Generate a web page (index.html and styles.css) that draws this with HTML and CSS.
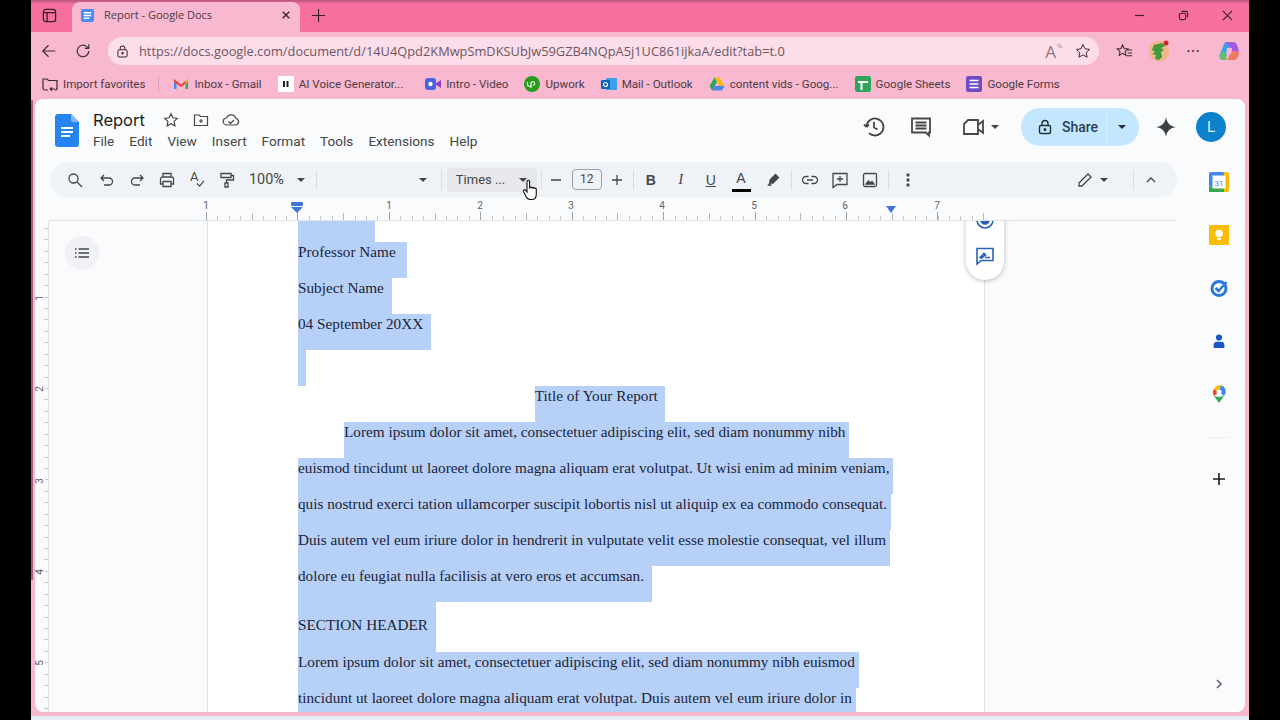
FILE: index.html
```html
<!DOCTYPE html>
<html lang="en">
<head>
    <meta charset="UTF-8">
    <title>Report - Google Docs</title>
    <link rel="stylesheet" href="styles.css">
</head>
<body>
<div class="browser">
    <!-- tab strip -->
    <div class="titlebar">
        <svg class="win-tabs" viewBox="0 0 16 16"><rect x="1.5" y="1.5" width="13" height="13" rx="2.5"/><path d="M2 5h12M5.5 5v9"/></svg>
        <div class="tab">
            <svg class="tab-icon" viewBox="0 0 16 16"><rect x="1" y="1" width="14" height="14" rx="2.5" fill="#4a8df0"/><path d="M4 5h8M4 8h8M4 11h6" stroke="#fff" stroke-width="1.5"/></svg>
            <span class="tab-title">Report - Google Docs</span>
            <svg class="tab-close" viewBox="0 0 12 12"><path d="M2 2l8 8M10 2l-8 8"/></svg>
        </div>
        <svg class="new-tab" viewBox="0 0 16 16"><path d="M8 1v14M1 8h14"/></svg>
        <div class="win-controls">
            <svg viewBox="0 0 12 12"><path d="M1 6h10"/></svg>
            <svg viewBox="0 0 12 12"><rect x="1.5" y="3.5" width="7" height="7" rx="2"/><path d="M4 1.5h4.5a2 2 0 0 1 2 2V8"/></svg>
            <svg viewBox="0 0 12 12"><path d="M1 1l10 10M11 1L1 11"/></svg>
        </div>
    </div>

    <!-- address bar -->
    <div class="navbar">
        <svg class="nav-btn" viewBox="0 0 18 18"><path d="M16 9H2M8.500 2.500L2 9l6.500 6.500"/></svg>
        <svg class="nav-btn nav-reload" viewBox="0 0 18 18"><path d="M15.500 9a6.500 6.500 0 1 1-2-4.700L15.500 6M15.500 1.500V6H11"/></svg>
        <div class="address">
            <svg class="addr-lock" viewBox="0 0 14 14"><rect x="2" y="5" width="10" height="8" rx="2"/><path d="M4.500 5V3.500a2.500 2.500 0 0 1 5 0V5"/><circle cx="7" cy="9" r=".8"/></svg>
            <span class="url">https://docs.google.com/document/d/14U4Qpd2KMwpSmDKSUbJw59GZB4NQpA5j1UC861ijkaA/edit?tab=t.0</span>
            <span class="read-aloud">A<svg viewBox="0 0 6 8"><path d="M1 1q2.500 1.500 2.500 4M3 .5q2.500 1.500 2.500 4.500"/></svg></span>
            <svg class="addr-star" viewBox="0 0 16 16"><path d="M8 1.500l2 4.300 4.600.6-3.400 3.200.9 4.600L8 11.900l-4.100 2.300.9-4.600L1.400 6.400 6 5.800z"/></svg>
        </div>
        <div class="nav-right">
            <svg class="fav" viewBox="0 0 18 18"><path d="M7 2l1.700 3.900 4 .4-3 2.800.9 4.100L7 11l-3.600 2.200.9-4.100-3-2.800 4-.4zM12 7.500h5M12.500 10.500h4.500M11.500 13.500h5.500"/></svg>
            <svg class="avatar-ext" viewBox="0 0 22 22"><circle cx="11" cy="11" r="10.500" fill="#f3b48f"/><path d="M6 5l8-2 3 3-4 2 3 2-3 2 1 5-3 3-4-1 1-4-4-1 3-2-3-2z" fill="#3f9a3c"/><circle cx="18" cy="3" r="2.500" fill="#d3242c"/></svg>
            <span class="more">&#8943;</span>
            <svg class="copilot" viewBox="0 0 22 22"><path d="M7 2h6l-3 9-3 9H5C2 20 1 17 2 14z" fill="#37a3e8"/><path d="M8 2h7c3 0 4 2 5 6l1 4-7-1z" fill="#a05ce0"/><path d="M14 11l7 1c0 4-2 8-5 8H9z" fill="#f0795f"/><path d="M6 11l-4 3c-1 3 0 6 3 6h4z" fill="#60c26b"/><path d="M9 8h5l-1 6H8z" fill="#f7b8d0"/></svg>
        </div>
    </div>

    <!-- favorites -->
    <div class="bookmarks">
        <div class="bm">
            <svg class="bm-icon" viewBox="0 0 16 16" fill="none" stroke="#3c2a32" stroke-width="1.200"><path d="M6 14H3a2 2 0 0 1-2-2V3h4l1.500 1.500H15V12a2 2 0 0 1-2 2M8 13l2-1.500M8 13l2 1.500M8 13h5"/></svg>
            <span>Import favorites</span>
        </div>
        <div class="bm-sep"></div>
        <div class="bm">
            <svg class="bm-icon" viewBox="0 0 16 16"><path d="M1 13V4l2.500 1v8z" fill="#4a87e8"/><path d="M15 13V4l-2.500 1v8z" fill="#3aa757"/><path d="M1 3l7 5.500L15 3v3L8 11 1 6z" fill="#e5483c"/><path d="M12.500 5V8L15 6V3z" fill="#f5bb14"/></svg>
            <span>Inbox - Gmail</span>
        </div>
        <div class="bm bm-wide">
            <svg class="bm-icon" viewBox="0 0 16 16"><rect width="16" height="16" rx="1" fill="#fff"/><path d="M6 5v6M9.500 5v6" stroke="#222" stroke-width="2"/></svg>
            <span>AI Voice Generator...</span>
        </div>
        <div class="bm">
            <svg class="bm-icon" viewBox="0 0 16 16"><rect y="2" width="11" height="12" rx="3" fill="#4a64e0"/><path d="M10 8l6-4v8z" fill="#8a3fd0"/><circle cx="5.500" cy="8" r="2.200" fill="#fff"/></svg>
            <span>Intro - Video</span>
        </div>
        <div class="bm">
            <svg class="bm-icon" viewBox="0 0 16 16"><circle cx="8" cy="8" r="8" fill="#2a9d1f"/><path d="M3.500 6v2.500a1.800 1.800 0 0 0 3.600 0V6M7.100 12V7.500a1.800 1.800 0 1 1 1.800 1.800" fill="none" stroke="#fff" stroke-width="1.100"/></svg>
            <span>Upwork</span>
        </div>
        <div class="bm">
            <svg class="bm-icon" viewBox="0 0 16 16"><rect x="5" y="2" width="11" height="12" rx="1" fill="#3aa0e8"/><rect y="4" width="9" height="9" rx="1" fill="#0f66b8"/><circle cx="4.500" cy="8.500" r="2" fill="none" stroke="#fff" stroke-width="1.200"/></svg>
            <span>Mail - Outlook</span>
        </div>
        <div class="bm">
            <svg class="bm-icon" viewBox="0 0 16 16"><path d="M5.500 1.500h5L15.500 10h-5z" fill="#f5bb14"/><path d="M5.500 1.500L.5 10 3 14.500 8 6z" fill="#2fa45a"/><path d="M3 14.500h10l2.500-4.500H5.500z" fill="#4a87e8"/></svg>
            <span>content vids - Goog...</span>
        </div>
        <div class="bm">
            <svg class="bm-icon" viewBox="0 0 16 16"><rect width="16" height="16" rx="2" fill="#2fa45a"/><path d="M3 6h10M6.500 6v8" stroke="#fff" stroke-width="2"/></svg>
            <span>Google Sheets</span>
        </div>
        <div class="bm">
            <svg class="bm-icon" viewBox="0 0 16 16"><rect width="16" height="16" rx="2" fill="#6f4bc4"/><path d="M3.500 4.500h9M3.500 8h9M3.500 11.500h9" stroke="#fff" stroke-width="1.500"/></svg>
            <span>Google Forms</span>
        </div>
    </div>

    <!-- docs app -->
    <div class="docs">
        <div class="doc-header">
            <svg class="doc-logo" viewBox="0 0 24 33"><path d="M3 0h13l8 8v22a3 3 0 0 1-3 3H3a3 3 0 0 1-3-3V3a3 3 0 0 1 3-3z" fill="#2684f0"/><path d="M16 0l8 8h-6a2 2 0 0 1-2-2z" fill="#8ab8f7"/><path d="M6 14h12M6 18h12M6 22h9" stroke="#fff" stroke-width="1.800"/></svg>
            <div class="doc-meta">
                <div class="doc-title-row">
                    <span class="doc-title">Report</span>
                    <svg class="ic ic-star" viewBox="0 0 16 16"><path d="M8 1.800l1.900 4 4.400.6-3.200 3 .8 4.400L8 11.700l-3.900 2.100.8-4.400-3.200-3 4.400-.6z"/></svg>
                    <svg class="ic ic-folder" viewBox="0 0 16 16"><path d="M1.500 3h4.500l1.500 1.500h7v9h-13zM8 7v4M6 9h4"/></svg>
                    <svg class="ic ic-cloud" viewBox="0 0 18 16"><path d="M5 13a3.500 3.500 0 0 1-.5-7A5 5 0 0 1 14 6.500 3.300 3.300 0 0 1 13.500 13zM6.500 9.500L8.500 11.500l3.500-3.500"/></svg>
                </div>
                <nav class="menu">
                    <span>File</span><span>Edit</span><span>View</span><span>Insert</span><span>Format</span><span>Tools</span><span>Extensions</span><span>Help</span>
                </nav>
            </div>
            <div class="doc-actions">
                <svg class="act act-history" viewBox="0 0 24 24"><path d="M4.500 12a8.500 8.500 0 1 1 2.600 6.100M4.500 12L2 9.500M4.500 12L7 9.500M12 7v5.500l3.500 2"/></svg>
                <svg class="act act-comment" viewBox="0 0 24 24"><path d="M3 3.500h18v14h-1v3l-3-3H3zM6.500 7.500h11M6.500 10.500h11M6.500 13.500h11"/></svg>
                <svg class="act act-meet" viewBox="0 0 24 24"><path d="M6 5h10v14H2V9zM16 10l5-4v12l-5-4z"/></svg>
                <span class="caret act-caret"></span>
                <div class="share">
                    <div class="share-main">
                        <svg viewBox="0 0 16 16"><rect x="2.500" y="6.500" width="11" height="8" rx="1.500"/><path d="M5 6.500V4.500a3 3 0 0 1 6 0v2"/><circle cx="8" cy="10.500" r=".8"/></svg>
                        <span>Share</span>
                    </div>
                    <div class="share-more"><span class="caret"></span></div>
                </div>
                <svg class="gemini" viewBox="0 0 24 24"><path d="M12 1c.8 6.500 4.500 10.200 11 11-6.500.8-10.200 4.500-11 11-.8-6.500-4.500-10.200-11-11 6.500-.8 10.200-4.500 11-11z"/></svg>
                <div class="user">L</div>
            </div>
        </div>

        <div class="doc-body">
            <div class="editor">
                <div class="toolbar">
                    <button class="tb"><svg viewBox="0 0 18 18"><circle cx="7.500" cy="7.500" r="4.500"/><path d="M11 11l5 5"/></svg></button>
                    <button class="tb tb-gap"><svg viewBox="0 0 18 18"><path d="M6 4L3 7l3 3M3 7h8a3.500 3.500 0 0 1 0 7H6"/></svg></button>
                    <button class="tb"><svg viewBox="0 0 18 18"><path d="M12 4l3 3-3 3M15 7H7a3.500 3.500 0 0 0 0 7h5"/></svg></button>
                    <button class="tb"><svg viewBox="0 0 18 18"><path d="M5 6V2.500h8V6M5 13H2.500V8a2 2 0 0 1 2-2h9a2 2 0 0 1 2 2v5H13M5 10.500h8v5H5z"/></svg></button>
                    <button class="tb tb-text"><span class="tb-spell">A</span><svg class="tb-check" viewBox="0 0 10 8"><path d="M1 4l3 3 5-6"/></svg></button>
                    <button class="tb"><svg viewBox="0 0 18 18"><path d="M3 2.500h10v4H3zM13 4.500h2.500v4.500H8.500v3M7 12h3v4H7z"/></svg></button>
                    <span class="tb-zoom">100%</span>
                    <span class="caret tb-zoom-caret"></span>
                    <span class="tb-sep tb-sep-zoom"></span>
                    <span class="caret tb-style-caret"></span>
                    <span class="tb-sep tb-sep-style"></span>
                    <div class="font-box"><span>Times ...</span><span class="caret"></span></div>
                    <span class="tb-sep tb-sep-font"></span>
                    <button class="tb tb-minus"><svg viewBox="0 0 18 18"><path d="M4 9h10"/></svg></button>
                    <div class="size-box">12</div>
                    <button class="tb"><svg viewBox="0 0 18 18"><path d="M4 9h10M9 4v10"/></svg></button>
                    <span class="tb-sep tb-sep-size"></span>
                    <button class="tb tb-letter tb-b">B</button>
                    <button class="tb tb-letter tb-i">I</button>
                    <button class="tb tb-letter tb-u">U</button>
                    <button class="tb tb-letter tb-a">A</button>
                    <button class="tb tb-high"><svg viewBox="0 0 18 18"><path d="M11.500 3.500l3 3-5.500 5.500H6V9z" fill="#444746"/><path d="M6 12l-1.500 2h3"/></svg></button>
                    <span class="tb-sep tb-sep-high"></span>
                    <button class="tb"><svg viewBox="0 0 18 18"><path d="M7.500 5.500H5a3.500 3.500 0 0 0 0 7h2.500M10.500 5.500H13a3.500 3.500 0 0 1 0 7h-2.500M6 9h6"/></svg></button>
                    <button class="tb"><svg viewBox="0 0 18 18"><path d="M2 2.500h14v11H6l-4 3zM9 5v6M6 8h6"/></svg></button>
                    <button class="tb"><svg viewBox="0 0 18 18"><rect x="2.500" y="2.500" width="13" height="13" rx="1.500"/><path d="M5 13l2.500-3 2 2 1.500-1.500L13 13z" fill="#444746"/></svg></button>
                    <span class="tb-sep tb-sep-img"></span>
                    <button class="tb"><svg viewBox="0 0 18 18"><circle cx="9" cy="4" r="1" fill="#444746"/><circle cx="9" cy="9" r="1" fill="#444746"/><circle cx="9" cy="14" r="1" fill="#444746"/></svg></button>
                    <button class="tb tb-pencil"><svg viewBox="0 0 18 18"><path d="M3 15v-3L12 3l3 3-9 9z"/></svg></button>
                    <span class="caret tb-pencil-caret"></span>
                    <span class="tb-sep tb-sep-mode"></span>
                    <button class="tb"><svg viewBox="0 0 18 18"><path d="M5 11l4-4 4 4"/></svg></button>
                </div>

                <div class="ruler">
                    <div class="ruler-ticks"></div>
                    <span class="rn rn-0">1</span><span class="rn rn-1">1</span><span class="rn rn-2">2</span><span class="rn rn-3">3</span><span class="rn rn-4">4</span><span class="rn rn-5">5</span><span class="rn rn-6">6</span><span class="rn rn-7">7</span>
                    <svg class="indent" viewBox="0 0 12 11"><rect x="0" y="0" width="12" height="4" rx="1"/><path d="M0 5h12l-6 6z"/></svg>
                    <svg class="indent-right" viewBox="0 0 10 7"><path d="M0 0h10L5 7z"/></svg>
                </div>

                <div class="workspace">
                    <div class="vruler">
                        <span class="vn vn-1">1</span><span class="vn vn-2">2</span><span class="vn vn-3">3</span><span class="vn vn-4">4</span><span class="vn vn-5">5</span>
                    </div>
                    <div class="gutter-left">
                        <button class="outline-btn"><svg viewBox="0 0 16 16"><path d="M1 4h1.500M1 8h1.500M1 12h1.500M4.500 4H15M4.500 8H15M4.500 12H15"/></svg></button>
                    </div>
                    <div class="page">
                        <div class="page-text">
                            <div class="line line-scrolled"><span></span></div>
                            <div class="line"><span>Professor Name&nbsp;&nbsp;&nbsp;</span></div>
                            <div class="line"><span>Subject Name&nbsp;&nbsp;</span></div>
                            <div class="line"><span>04 September 20XX&nbsp;&nbsp;</span></div>
                            <div class="line"><span>&nbsp;&nbsp;</span></div>
                            <div class="line line-center"><span>Title of Your Report&nbsp;&nbsp;</span></div>
                            <div class="line line-indent"><span>Lorem ipsum dolor sit amet, consectetuer adipiscing elit, sed diam nonummy nibh&nbsp;</span></div>
                            <div class="line"><span>euismod tincidunt ut laoreet dolore magna aliquam erat volutpat. Ut wisi enim ad minim veniam,&nbsp;</span></div>
                            <div class="line"><span>quis nostrud exerci tation ullamcorper suscipit lobortis nisl ut aliquip ex ea commodo consequat.&nbsp;</span></div>
                            <div class="line"><span>Duis autem vel eum iriure dolor in hendrerit in vulputate velit esse molestie consequat, vel illum&nbsp;</span></div>
                            <div class="line"><span>dolore eu feugiat nulla facilisis at vero eros et accumsan.&nbsp;&nbsp;</span></div>
                            <div class="line line-heading"><span>SECTION HEADER&nbsp;&nbsp;</span></div>
                            <div class="line"><span>Lorem ipsum dolor sit amet, consectetuer adipiscing elit, sed diam nonummy nibh euismod&nbsp;</span></div>
                            <div class="line"><span>tincidunt ut laoreet dolore magna aliquam erat volutpat. Duis autem vel eum iriure dolor in&nbsp;</span></div>
                        </div>
                    </div>
                    <div class="float-pill">
                        <svg viewBox="0 0 20 20"><circle cx="10" cy="10" r="8"/><circle cx="10" cy="10" r="4" fill="#2a62b8"/></svg>
                        <svg viewBox="0 0 20 20"><path d="M2 2.500h16v12H6l-4 3.500zM5 11.500l4-4 1.500 1.500-4 3zM10 11.500h5"/></svg>
                    </div>
                    <div class="scroll-thumb"></div>
                </div>
            </div>

            <aside class="side-panel">
                <svg class="side-icon" viewBox="0 0 20 20"><rect width="20" height="20" rx="2" fill="#fbbc04"/><rect width="15" height="15" x="0" y="0" rx="2" fill="#4285f4"/><rect x="0" y="15" width="15" height="5" fill="#34a853"/><rect x="3.500" y="3.500" width="13" height="13" fill="#fff"/><text x="10" y="13.500" class="cal-num">31</text></svg>
                <svg class="side-icon" viewBox="0 0 20 20"><rect width="20" height="20" rx="1" fill="#fbbc04"/><circle cx="10" cy="8.500" r="3.800" fill="#fff"/><rect x="8" y="13" width="4" height="2" fill="#fff"/></svg>
                <svg class="side-icon" viewBox="0 0 20 20"><circle cx="10" cy="10.500" r="7" fill="none" stroke="#2a74de" stroke-width="3"/><path d="M6.500 10l3 3 8-9" fill="none" stroke="#2a74de" stroke-width="2.500"/></svg>
                <svg class="side-icon" viewBox="-3 -3 26 26"><circle cx="10" cy="5.500" r="4" fill="#1a56c4"/><path d="M3 19v-3q0-5 4-5h6q4 0 4 5v3z" fill="#1a56c4"/></svg>
                <svg class="side-icon" viewBox="0 0 20 20"><path d="M10 19l-5-7 5 1z" fill="#34a853"/><path d="M10 19l5-7-5 1z" fill="#34a853"/><path d="M5 12a6.500 6.500 0 0 1 0-7l5 3z" fill="#ea4335"/><path d="M5 5a6.500 6.500 0 0 1 7-3.700L10 8z" fill="#fbbc04"/><path d="M12 1.300A6.500 6.500 0 0 1 15 12l-5-4z" fill="#4285f4"/><circle cx="10" cy="8" r="2.500" fill="#fff"/></svg>
                <div class="side-sep"></div>
                <svg class="side-plus" viewBox="0 0 16 16"><path d="M8 2v12M2 8h12"/></svg>
                <svg class="side-chevron" viewBox="0 0 10 12"><path d="M3 2l4 4-4 4"/></svg>
            </aside>
        </div>

        <svg class="hand" viewBox="0 0 16 22"><path d="M5 2.500a1.300 1.300 0 0 1 2.600 0V9l.5-.2a1.200 1.200 0 0 1 2.200.2 1.200 1.200 0 0 1 2 .4 1.200 1.200 0 0 1 2 .8V15c0 3-1.500 5.500-4.500 5.500H8c-2 0-3-1-4-3L1.500 12.500c-.6-1.400 1-2.400 2-1.400L5 13z"/></svg>
    </div>
    <div class="frame-bottom"></div>
</div>
</body>
</html>
```

FILE: styles.css
```css
* {
    box-sizing: border-box;
}
html, body {
    margin: 0;
    height: 720px;
    overflow: hidden;
    background: #000;
}
svg {
    display: block;
    flex: none;
}
button {
    border: none;
    background: none;
    padding: 0;
    font: inherit;
}

/* browser chrome */
.browser {
    width: 1218px;
    height: 720px;
    margin: 0 auto;
    display: flex;
    flex-direction: column;
    font-family: "Open Sans", "Noto Sans", sans-serif;
    background: linear-gradient(90deg, #a8607a 0 2px, transparent 2px) 0 100px / 100% 480px no-repeat, #f7b8d0;
}
.titlebar {
    height: 32px;
    display: flex;
    align-items: flex-end;
    background: linear-gradient(#b9577c, #f56f9f 4px);
    padding-left: 11px;
    fill: none;
    stroke: #3b2028;
}
.win-tabs {
    width: 15px;
    height: 15px;
    margin: 0 15px 9px 0;
    stroke-width: 1.4;
}
.tab {
    width: 228px;
    height: 30px;
    display: flex;
    align-items: center;
    padding: 0 8px 4px 8px;
    background: #f7b8d0;
    border-radius: 8px 8px 0 0;
}
.tab-icon {
    width: 15px;
    height: 15px;
    stroke: none;
}
.tab-title {
    margin: 0 0 1px 9px;
    font-size: 11px;
    color: #4f3a42;
    stroke: none;
    flex: 1;
}
.tab-close {
    width: 10px;
    height: 10px;
    margin-right: 1px;
    stroke-width: 1.6;
}
.new-tab {
    width: 15px;
    height: 15px;
    margin: 0 0 9px 11px;
    stroke-width: 1.2;
}
.win-controls {
    margin-left: auto;
    display: flex;
    align-items: center;
    gap: 33px;
    padding: 0 16px 11px 0;
}
.win-controls svg {
    width: 11px;
    height: 11px;
    stroke-width: 1.2;
}
.navbar {
    height: 38px;
    display: flex;
    align-items: center;
    padding-left: 10px;
    fill: none;
    stroke: #3b2a30;
}
.nav-btn {
    width: 16px;
    height: 16px;
    stroke-width: 1.3;
}
.nav-reload {
    margin-left: 18px;
    margin-right: 17px;
}
.address {
    width: 991px;
    height: 28px;
    display: flex;
    align-items: center;
    padding: 0 8px 0 8px;
    background: #fcdde9;
    border-radius: 14px;
}
.addr-lock {
    width: 13px;
    height: 13px;
    stroke-width: 1.1;
}
.url {
    margin-left: 10px;
    font-size: 12.84px;
    color: #6d5660;
    stroke: none;
    flex: 1;
    white-space: nowrap;
}
.read-aloud {
    display: flex;
    font-size: 17px;
    color: #8c767f;
    stroke: #8c767f;
    margin-right: 13px;
}
.read-aloud svg {
    width: 6px;
    height: 8px;
    margin-top: 3px;
    stroke-width: .7;
}
.addr-star {
    width: 16px;
    height: 16px;
    stroke-width: 1;
}
.nav-right {
    display: flex;
    align-items: center;
    padding-left: 17px;
}
.fav {
    width: 17px;
    height: 17px;
    stroke-width: 1.1;
}
.avatar-ext {
    width: 22px;
    height: 22px;
    margin-left: 15px;
    stroke: none;
}
.more {
    margin-left: 16px;
    width: 14px;
    font-size: 14px;
    line-height: 1;
    color: #3b2a30;
    stroke: none;
    text-align: center;
}
.copilot {
    width: 22px;
    height: 22px;
    margin-left: 18px;
    stroke: none;
}
.bookmarks {
    height: 29px;
    display: flex;
    align-items: center;
    gap: 16px;
    padding: 0 0 2px 11px;
    font-family: Roboto, sans-serif;
    font-size: 11.6px;
    color: #4f3a42;
    white-space: nowrap;
}
.bm {
    display: flex;
    align-items: center;
    gap: 5px;
}
.bm-icon {
    width: 16px;
    height: 16px;
}
.bm-sep {
    width: 1px;
    height: 16px;
    margin: 0 -2px 0 -3px;
    background: #e69dba;
}
.bm-wide {
    margin-right: 6px;
}

/* docs */
.docs {
    position: relative;
    height: 613px;
    margin: 0 4px;
    display: flex;
    flex-direction: column;
    background: #f9fbfd;
    border-radius: 8px 8px 8px 8px;
    overflow: hidden;
}
.frame-bottom {
    flex: 1;
    margin-top: 4px;
    background: #e4eef4;
}
.doc-header {
    height: 63px;
    flex: none;
    display: flex;
    align-items: flex-start;
    padding: 15px 0 0 20px;
}
.doc-logo {
    width: 24px;
    height: 33px;
}
.doc-meta {
    margin-left: 14px;
    margin-top: -7px;
}
.doc-title-row {
    display: flex;
    align-items: center;
    height: 26px;
    fill: none;
    stroke: #444746;
}
.doc-title {
    font-family: Inter, "Open Sans", sans-serif;
    font-size: 16.5px;
    color: #1f1f1f;
    width: 70px;
}
.ic {
    height: 16px;
    width: 16px;
    stroke-width: 1.2;
}
.ic-folder {
    margin-left: 14px;
}
.ic-cloud {
    width: 18px;
    margin-left: 13px;
}
.menu {
    display: flex;
    margin-top: -2px;
    font-family: Roboto, sans-serif;
    font-size: 13.6px;
    line-height: 20px;
    color: #444746;
    gap: 15px;
}
.doc-actions {
    margin-left: auto;
    display: flex;
    align-items: center;
    height: 38px;
    margin-top: -6px;
    fill: none;
    stroke: #444746;
}
.act {
    width: 24px;
    height: 24px;
    stroke-width: 1.8;
}
.act-comment {
    margin-left: 23px;
}
.act-meet {
    margin-left: 29px;
}
.caret {
    display: inline-block;
    flex: none;
    width: 0;
    height: 0;
    border-left: 4px solid transparent;
    border-right: 4px solid transparent;
    border-top: 4px solid #444746;
}
.act-caret {
    margin-left: 5px;
}
.share {
    margin-left: 22px;
    width: 118px;
    height: 38px;
    display: flex;
    background: #c2e7ff;
    border-radius: 19px;
    color: #2a3f52;
    stroke: #22303c;
}
.share-main {
    width: 86px;
    display: flex;
    align-items: center;
    padding-left: 16px;
    gap: 9px;
    font-family: Roboto, sans-serif;
    font-weight: 500;
    font-size: 14px;
    border-right: 1px solid #d6effe;
}
.share-main svg {
    width: 16px;
    height: 16px;
    stroke-width: 1.4;
}
.share-more {
    flex: 1;
    display: flex;
    align-items: center;
    justify-content: center;
    padding-right: 2px;
}
.share-more .caret {
    border-top-color: #22303c;
}
.gemini {
    width: 22px;
    height: 22px;
    margin-left: 16px;
    fill: #3c4043;
    stroke: none;
}
.user {
    width: 30px;
    height: 30px;
    margin: 0 19px 0 19px;
    border-radius: 50%;
    background: #0b82cb;
    color: #dff1fc;
    font-family: Roboto, sans-serif;
    font-size: 15px;
    line-height: 30px;
    text-align: center;
}
.doc-body {
    flex: 1;
    min-height: 0;
    display: flex;
}
.editor {
    width: 1142px;
    display: flex;
    flex-direction: column;
}

/* toolbar */
.toolbar {
    height: 35px;
    flex: none;
    margin-left: 15px;
    display: flex;
    align-items: center;
    padding: 0 11px 0 10px;
    background: #eff3f8;
    border-radius: 18px;
    color: #444746;
    font-family: Roboto, sans-serif;
    font-size: 13px;
}
.tb {
    position: relative;
    width: 30px;
    height: 24px;
    flex: none;
    display: flex;
    align-items: center;
    justify-content: center;
    color: #444746;
    fill: none;
    stroke: #444746;
}
.tb svg {
    width: 18px;
    height: 18px;
    stroke-width: 1.3;
}
.tb-gap {
    margin-left: 2px;
}
.tb-spell {
    position: absolute;
    left: 8px;
    top: 1px;
    font-size: 13px;
}
.tb .tb-check {
    position: absolute;
    left: 14px;
    top: 12px;
    width: 9px;
    height: 7px;
}
.tb-zoom {
    margin-left: 7px;
    font-size: 14.4px;
}
.tb-zoom-caret {
    margin-left: 13px;
}
.tb-sep {
    width: 1px;
    height: 20px;
    flex: none;
    background: #dadce0;
}
.tb-sep-zoom {
    margin-left: 11px;
}
.tb-style-caret {
    margin-left: 102px;
}
.tb-sep-style {
    margin-left: 14px;
}
.font-box {
    width: 90px;
    height: 24px;
    margin-left: 5px;
    display: flex;
    align-items: center;
    justify-content: space-between;
    padding: 0 10px 0 9px;
    background: #e6e8eb;
    border-radius: 4px;
}
.tb-sep-font {
    margin-left: 4px;
}
.tb-minus {
    width: 28px;
}
.size-box {
    width: 30px;
    height: 21px;
    margin-left: 2px;
    border: 1px solid #9aa0a6;
    border-radius: 4px;
    text-align: center;
    line-height: 19px;
    font-size: 12px;
}
.tb-sep-size {
    margin-left: 1px;
    margin-right: 2px;
}
.tb-letter {
    font-family: "Liberation Sans", sans-serif;
    font-size: 14px;
}
.tb-b {
    font-weight: bold;
}
.tb-i {
    font-family: "Liberation Serif", serif;
    font-style: italic;
    font-size: 15px;
}
.tb-u {
    text-decoration: underline;
}
.tb-a {
    align-items: flex-start;
    line-height: 20px;
}
.tb-a::after {
    content: "";
    position: absolute;
    left: 6px;
    bottom: 0;
    width: 19px;
    height: 3px;
    background: #000;
}
.tb-high {
    margin-left: 2px;
}
.tb-sep-high {
    margin: 0 3px 0 3px;
}
.tb-sep-img {
    margin: 0 4px 0 3px;
}
.tb-pencil {
    margin-left: auto;
}
.tb-pencil-caret {
    margin-left: 0;
}
.tb-sep-mode {
    margin: 0 2px 0 25px;
}

/* rulers */
.ruler {
    position: relative;
    height: 24px;
    flex: none;
    margin-left: 14px;
    border-bottom: 1px solid #dfe3e6;
    font-family: Roboto, sans-serif;
    font-size: 10px;
    color: #5f6368;
}
.ruler-ticks {
    position: absolute;
    left: 157px;
    width: 778px;
    bottom: 0;
    height: 9px;
    background:
        repeating-linear-gradient(90deg, #9aa0a6 0 1px, transparent 1px 91.43px) 0 bottom / 100% 9px no-repeat,
        repeating-linear-gradient(90deg, #b8bcc0 0 1px, transparent 1px 45.715px) 0 bottom / 100% 7px no-repeat,
        repeating-linear-gradient(90deg, #c4c7ca 0 1px, transparent 1px 11.43px) 0 bottom / 100% 4px no-repeat;
}
.rn {
    position: absolute;
    top: 2px;
    width: 10px;
    margin-left: -5px;
    text-align: center;
    background: #f9fbfd;
    line-height: 13px;
}
.rn-0 { left: 157px; }
.rn-1 { left: 340px; }
.rn-2 { left: 431px; }
.rn-3 { left: 522px; }
.rn-4 { left: 613px; }
.rn-5 { left: 705px; }
.rn-6 { left: 796px; }
.rn-7 { left: 888px; }
.indent {
    position: absolute;
    left: 242px;
    top: 5px;
    width: 12px;
    height: 11px;
    fill: #3f76d6;
}
.indent-right {
    position: absolute;
    left: 837px;
    top: 9px;
    width: 10px;
    height: 7px;
    fill: #3f76d6;
}
.workspace {
    position: relative;
    flex: 1;
    min-height: 0;
    display: flex;
    overflow: hidden;
}
.vruler {
    position: relative;
    width: 14px;
    flex: none;
    border-right: 1px solid #dfe3e6;
    font-family: Roboto, sans-serif;
    font-size: 10px;
    color: #5f6368;
    background:
        repeating-linear-gradient(180deg, #9aa0a6 0 1px, transparent 1px 91.43px) right -16px top 0 / 7px 100% no-repeat,
        repeating-linear-gradient(180deg, #c4c7ca 0 1px, transparent 1px 11.43px) right 0 top 7px / 4px 100% no-repeat;
}
.vn {
    position: absolute;
    left: 0;
    width: 10px;
    line-height: 10px;
    text-align: center;
    transform: rotate(-90deg);
    background: #f9fbfd;
}
.vn-1 { top: 72px; }
.vn-2 { top: 163px; }
.vn-3 { top: 255px; }
.vn-4 { top: 346px; }
.vn-5 { top: 437px; }
.gutter-left {
    width: 158px;
    flex: none;
    padding: 15px 0 0 16px;
}
.outline-btn {
    width: 34px;
    height: 34px;
    display: flex;
    align-items: center;
    justify-content: center;
    background: #eff1f4;
    border-radius: 50%;
    fill: none;
    stroke: #444746;
}
.outline-btn svg {
    width: 16px;
    height: 16px;
    stroke-width: 1.4;
}

/* page */
.page {
    width: 778px;
    flex: none;
    background: #fff;
    border-left: 1px solid #dfe3e6;
    border-right: 1px solid #dfe3e6;
    padding: 0 90px;
    font-family: "Liberation Serif", serif;
    font-size: 15.24px;
    color: #1b2436;
}
.page-text {
    margin-top: -15px;
}
.line {
    height: 36px;
    line-height: 20px;
    white-space: nowrap;
    display: flex;
}
.line span {
    display: block;
    height: 100%;
    background: #b7d0f8;
}
.line-scrolled span {
    width: 77px;
}
.line-center {
    justify-content: center;
    padding-left: 8px;
}
.line-indent {
    padding-left: 46px;
}
.line-heading {
    height: 50px;
}
.line-heading span {
    padding-top: 13px;
}
.float-pill {
    position: absolute;
    left: 931px;
    top: -16px;
    width: 38px;
    height: 75px;
    display: flex;
    flex-direction: column;
    align-items: center;
    justify-content: flex-end;
    gap: 16px;
    padding-bottom: 14px;
    background: #fff;
    border-radius: 0 0 19px 19px;
    box-shadow: 0 1px 5px rgba(60, 64, 67, .35);
    fill: none;
    stroke: #2a62b8;
}
.float-pill svg {
    width: 20px;
    height: 20px;
    stroke-width: 1.6;
}
.scroll-thumb {
    position: absolute;
    left: 1146px;
    top: 23px;
    width: 8px;
    height: 70px;
    background: #dde0e3;
    border-radius: 4px;
}

/* side panel */
.side-panel {
    flex: 1;
    display: flex;
    flex-direction: column;
    align-items: center;
    padding: 10px 0 0 16px;
}
.side-icon {
    width: 20px;
    height: 20px;
    margin-bottom: 33px;
}
.cal-num {
    font-family: Roboto, sans-serif;
    font-size: 8px;
    fill: #4285f4;
    text-anchor: middle;
}
.side-sep {
    width: 20px;
    height: 1px;
    background: #eceff1;
}
.side-plus {
    width: 16px;
    height: 16px;
    margin-top: 33px;
    fill: none;
    stroke: #1f1f1f;
    stroke-width: 1.6;
}
.side-chevron {
    width: 10px;
    height: 12px;
    margin-top: auto;
    margin-bottom: 22px;
    fill: none;
    stroke: #5f6368;
    stroke-width: 1.6;
}
.hand {
    position: absolute;
    left: 487px;
    top: 80px;
    width: 16px;
    height: 22px;
    fill: #fff;
    stroke: #111;
    stroke-width: 1.1;
}
```
